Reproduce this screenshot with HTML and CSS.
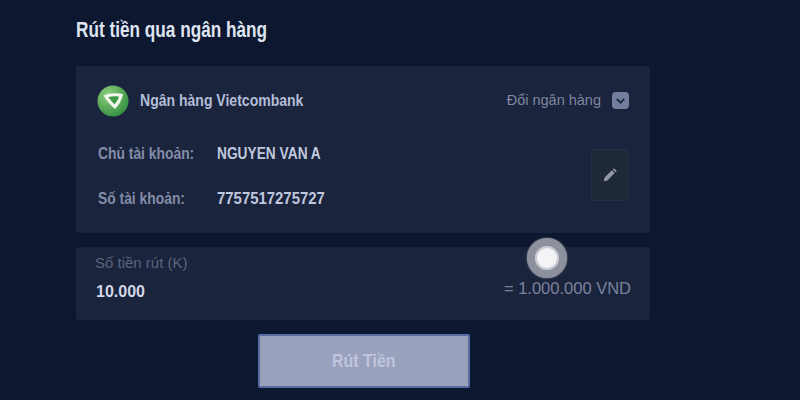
FILE: index.html
```html
<!DOCTYPE html>
<html lang="en">
<head>
  <meta charset="UTF-8" />
  <title>Rút tiền qua ngân hàng</title>
  <link rel="stylesheet" href="styles.css">
</head>
<body>
  <div class="page">
    <h1 class="title"><span class="narrow">Rút tiền qua ngân hàng</span></h1>

    <div class="card bank-card">
      <div class="bank-row">
        <svg class="bank-logo" viewBox="0 0 32 32" aria-hidden="true">
          <defs>
            <radialGradient id="vcb" cx="35%" cy="30%" r="80%">
              <stop offset="0" stop-color="#8fd07e" />
              <stop offset="1" stop-color="#2f8a3c" />
            </radialGradient>
          </defs>
          <circle cx="16" cy="16" r="15.5" fill="url(#vcb)" />
          <path d="M6.500 10.500c5-2.500 13-3 19.500-1.500-1 6-4 11-8 15-4.500-3.500-8.500-8.500-11.500-13.500z" fill="#f2f7ee" />
          <path d="M11.500 12c3.500-.8 7.500-.9 10.500-.3-1 3-2.600 5.400-4.500 7.500-2.400-2-4.500-4.500-6-7.200z" fill="#3f9a48" />
        </svg>
        <span class="bank-name narrow">Ngân hàng Vietcombank</span>
        <div class="change-bank">
          <span>Đổi ngân hàng</span>
          <span class="chevron-box">
            <svg viewBox="0 0 16 16" aria-hidden="true"><path d="M4.500 6.500 8 10l3.500-3.500" fill="none" stroke="#1c2740" stroke-width="1.800" /></svg>
          </span>
        </div>
      </div>

      <div class="account">
        <div class="account-rows">
          <div class="info-row">
            <span class="info-label"><span class="narrow">Chủ tài khoản:</span></span>
            <span class="info-value narrow">NGUYEN VAN A</span>
          </div>
          <div class="info-row">
            <span class="info-label"><span class="narrow">Số tài khoản:</span></span>
            <span class="info-value narrow digits">7757517275727</span>
          </div>
        </div>
        <button class="edit-btn" aria-label="edit">
          <svg viewBox="0 0 16 16" aria-hidden="true"><path d="M2.500 13.500l.7-3.200 6.500-6.500 2.500 2.500-6.500 6.500zM10.500 3l1-1 2.500 2.500-1 1z" fill="#9398a8" /></svg>
        </button>
      </div>
    </div>

    <div class="card amount-card">
      <div>
        <div class="amount-label">Số tiền rút (K)</div>
        <div class="amount-value">10.000</div>
      </div>
      <div class="amount-total">= 1.000.000 VND</div>
    </div>

    <button class="submit"><span class="narrow">Rút Tiền</span></button>
  </div>

  <!-- touch indicator from the screen recording -->
  <div class="touch-dot"></div>
</body>
</html>
```

FILE: styles.css
```css
body {
  margin: 0;
  height: 400px;
  overflow: hidden;
  background-color: #0d1830;
  font-family: "Liberation Sans", Arial, sans-serif;
  position: relative;
}

.page {
  width: 574px;
  margin-left: 76px;
  padding-top: 20px;
  display: flex;
  flex-direction: column;
}

/* the original uses a condensed face, none is installed */
.narrow {
  display: inline-block;
  white-space: nowrap;
  transform: scaleX(0.815);
  transform-origin: left center;
}

.title {
  margin: 0 0 26px;
  font-size: 21.5px;
  line-height: 20px;
  font-weight: 700;
  color: #dfe4f1;
}

.title .narrow {
  transform: scaleX(0.8);
}

.card {
  background-color: #1a243c;
  border-radius: 3px;
  box-sizing: border-box;
}

.bank-card {
  height: 167px;
  padding: 19px 21px 0;
}

.bank-row {
  display: flex;
  align-items: center;
  height: 32px;
}

.bank-logo {
  width: 32px;
  height: 32px;
  margin-right: 11px;
  flex-shrink: 0;
}

.bank-name {
  font-size: 17px;
  font-weight: 700;
  color: #b4bdd8;
  transform: scaleX(0.825);
}

.change-bank {
  margin-left: auto;
  margin-top: -2px;
  display: flex;
  align-items: center;
  gap: 11px;
  font-size: 14.5px;
  color: #7e87a0;
}

.chevron-box {
  width: 17px;
  height: 17px;
  border-radius: 4px;
  background-color: #747f9e;
  display: flex;
}

.chevron-box svg {
  width: 17px;
  height: 17px;
}

.account {
  display: flex;
  justify-content: space-between;
  align-items: flex-start;
}

.account-rows {
  padding-top: 27px;
  display: flex;
  flex-direction: column;
  gap: 26px;
}

.info-row {
  display: flex;
  align-items: center;
  height: 19px;
  font-size: 17px;
  font-weight: 700;
}

.info-label {
  width: 119px;
  padding-left: 1px;
  color: #838ca8;
}

.info-value {
  color: #c0c8df;
  transform: scaleX(0.808);
}

.digits {
  transform: scaleX(0.877);
}

.edit-btn {
  width: 38px;
  height: 52px;
  margin-top: 32px;
  padding: 0;
  background-color: #1f2839;
  border: 1px solid #262f43;
  border-radius: 3px;
  display: flex;
  align-items: center;
  justify-content: center;
}

.edit-btn svg {
  width: 18px;
  height: 18px;
}

.amount-card {
  height: 73px;
  margin-top: 14px;
  padding: 7px 19px 0 19px;
  display: flex;
  justify-content: space-between;
}

.amount-label {
  font-size: 15px;
  line-height: 18px;
  color: #5b647c;
}

.amount-value {
  margin-top: 11px;
  padding-left: 1px;
  font-size: 16px;
  line-height: 18px;
  font-weight: 700;
  color: #d3d8e6;
}

.amount-total {
  margin-top: 25px;
  font-size: 16.5px;
  line-height: 18px;
  color: #7a839c;
}

.submit {
  width: 212px;
  height: 54px;
  margin: 14px 0 0 182px;
  padding: 0;
  background-color: #9aa1bd;
  border: 2px solid #5b6ba6;
  border-radius: 2px;
  font-family: inherit;
  font-size: 19px;
  font-weight: 700;
  color: #bfc6de;
}

.submit .narrow {
  transform: scaleX(0.84);
  transform-origin: center;
}

.touch-dot {
  position: absolute;
  left: 527px;
  top: 238px;
  width: 24px;
  height: 24px;
  border: 8px solid #8d919d;
  border-radius: 50%;
  background-color: #f4f4f6;
  box-shadow: inset 0 0 0 2px #c9cbd2, 0 0 2px #8d919d;
}
```
